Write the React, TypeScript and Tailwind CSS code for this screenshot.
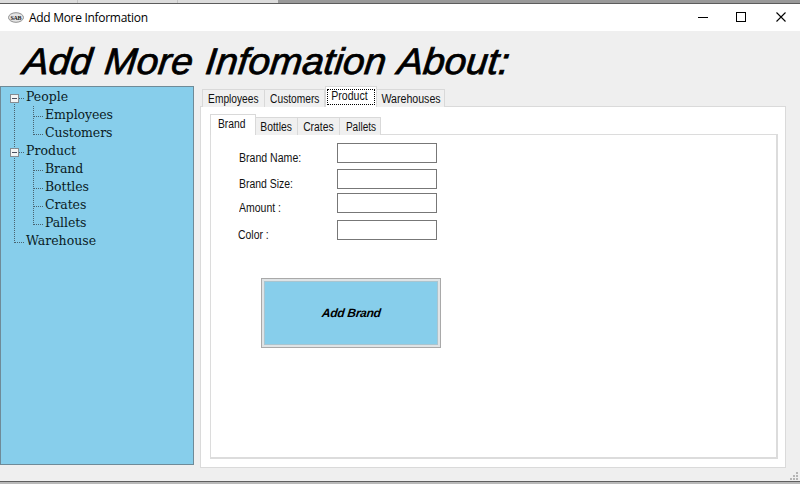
import React from "react";

const UI = "font-['Liberation_Sans',Arial,sans-serif]";

type TabSpec = { label: string; box: string; text: string };

function Tab({ label, box, text, selected, focused }: TabSpec & { selected?: boolean; focused?: boolean }) {
  return (
    <div
      className={`relative shrink-0 border border-b-0 border-[#d9d9d9] ${box} ${
        selected ? "z-10 h-[21px] bg-white" : "h-[18px] bg-[#f0f0f0]"
      }`}
    >
      {focused && <div className="absolute inset-x-[1px] top-[2px] bottom-[2px] border border-dotted border-black" />}
      <span className={`block origin-left whitespace-nowrap text-[12px] leading-[18px] text-[#111] ${text}`}>{label}</span>
    </div>
  );
}

const tree = [
  { label: "People", level: 0 },
  { label: "Employees", level: 1 },
  { label: "Customers", level: 1, last: true },
  { label: "Product", level: 0 },
  { label: "Brand", level: 1 },
  { label: "Bottles", level: 1 },
  { label: "Crates", level: 1 },
  { label: "Pallets", level: 1, last: true },
  { label: "Warehouse", level: 0, last: true },
];

function Branches({ index }: { index: number }) {
  const n = tree[index];
  return (
    <svg width="44" height="18" className="absolute left-0 top-0" shapeRendering="crispEdges">
      <g stroke="#49636f" strokeDasharray="1 1" fill="none">
        <path d={index === 0 ? "M13.5 10V18" : index === 8 ? "M13.5 0V11" : "M13.5 0V18"} />
        {n.level === 0 && <path d="M14 10.5H23" />}
        {n.level === 1 && <path d={n.last ? "M32.5 0V11" : "M32.5 0V18"} />}
        {n.level === 1 && <path d="M33 10.5H42" />}
      </g>
      {n.level === 0 && index !== 8 && (
        <g>
          <rect x="9.5" y="6.5" width="8" height="8" rx="1" fill="#f4f4f4" stroke="#858c92" />
          <path d="M11 10.5H16" stroke="#4b5162" />
        </g>
      )}
    </svg>
  );
}

const fields = [
  { label: "Brand Name:", gap: "mt-[8px]", pad: "pl-[28px] pt-[7px]", text: "scale-x-[0.88]" },
  { label: "Brand Size:", gap: "mt-[6px]", pad: "pl-[28px] pt-[7px]", text: "scale-x-[0.87]" },
  { label: "Amount :", gap: "mt-[4px]", pad: "pl-[28px] pt-[7px]", text: "scale-x-[0.875]" },
  { label: "Color :", gap: "mt-[7px]", pad: "pl-[27px] pt-[7px]", text: "scale-x-[0.87]" },
];

const outerTabs: TabSpec[] = [
  { label: "Employees", box: "w-[63px]", text: "pl-[6px] scale-x-[0.85]" },
  { label: "Customers", box: "w-[60px] border-l-0", text: "pl-[6px] scale-x-[0.85]" },
  { label: "Product", box: "w-[52px]", text: "pl-[6px] scale-x-[0.88]" },
  { label: "Warehouses", box: "w-[68px] border-l-0", text: "pl-[5px] scale-x-[0.885]" },
];

const innerTabs: TabSpec[] = [
  { label: "Brand", box: "w-[46px]", text: "pl-[8px] scale-x-[0.86]" },
  { label: "Bottles", box: "w-[42px] border-l-0", text: "pl-[5px] scale-x-[0.86]" },
  { label: "Crates", box: "w-[42px] border-l-0", text: "pl-[6px] scale-x-[0.86]" },
  { label: "Pallets", box: "w-[41px] border-l-0", text: "pl-[7px] scale-x-[0.84]" },
];

export default function App() {
  return (
    <div className={`flex h-[484px] w-[800px] flex-col overflow-hidden bg-[#efefef] ${UI}`}>
      <div className="flex h-[4px] shrink-0 border-b border-[#5c5c5c]">
        <div className="w-[78px] border-r border-[#c4c4c4] bg-[#dcdcdc]" />
        <div className="w-[100px] border-r border-[#c4c4c4] bg-[#dcdcdc]" />
        <div className="w-[100px] bg-[#dcdcdc]" />
        <div className="flex-1 bg-[#999]" />
      </div>

      <header className="flex h-[27px] shrink-0 items-center bg-white">
        <svg width="16" height="11" className="ml-[8px]">
          <ellipse cx="8" cy="5.5" rx="7.5" ry="4.8" fill="#e5e5e5" stroke="#858585" strokeWidth="0.9" />
          <text x="8" y="8" textAnchor="middle" textLength="11" fontSize="6" fontWeight="bold" fontFamily="Liberation Serif, serif" fill="#222">SAB</text>
        </svg>
        <span className="ml-[5px] whitespace-nowrap font-['Open_Sans','Noto_Sans',sans-serif] text-[12px] leading-[16px] tracking-[-0.3px] text-black">Add More Information</span>
        <svg width="110" height="26" className="ml-auto" shapeRendering="crispEdges" fill="none" stroke="#000">
          <path d="M8 12.5H18" />
          <rect x="46.5" y="7.5" width="9" height="9" />
          <path d="M86.5 7.5L95.5 16.5M95.5 7.5L86.5 16.5" shapeRendering="auto" strokeWidth="1.1" />
        </svg>
      </header>

      <h1 className="h-[55px] shrink-0 whitespace-nowrap pl-[21px] pt-[10px] text-[37px] leading-[42px] text-black">
        <span className="inline-block origin-bottom-left -skew-x-[6deg] scale-x-[1.045] italic [word-spacing:2px] [-webkit-text-stroke:0.8px_black]">
          Add More Infomation About:
        </span>
      </h1>

      <main className="flex h-[395px] shrink-0">
        <nav className="h-[379px] w-[194px] shrink-0 border border-[#6f8b98] bg-[#87ceeb] pt-[1px] font-['DejaVu_Serif',serif]">
          {tree.map((n, i) => (
            <div key={n.label} className="relative h-[18px]">
              <Branches index={i} />
              <span
                className={`block whitespace-nowrap text-[12.5px] leading-[18px] text-[#0b1c25] ${
                  n.level === 0 ? "pl-[25px]" : "pl-[44px] tracking-[-0.1px]"
                }`}
              >
                {n.label}
              </span>
            </div>
          ))}
        </nav>

        <section className="ml-[6px] w-[586px] pt-[2px]">
          <div className="flex h-[19px] items-end pl-[2px]">
            {outerTabs.map((t) => (
              <Tab key={t.label} {...t} selected={t.label === "Product"} focused={t.label === "Product"} />
            ))}
          </div>
          <div className="-mt-px h-[362px] border border-[#dadada] bg-white pl-[9px] pt-[8px]">
            <div className="flex h-[20px] items-end">
              {innerTabs.map((t) => (
                <Tab key={t.label} {...t} selected={t.label === "Brand"} />
              ))}
            </div>
            <div className="-mt-px h-[325px] w-[568px] border border-r-2 border-b-2 border-[#dcdcdc]">
              {fields.map((f) => (
                <label key={f.label} className={`flex h-[20px] ${f.gap}`}>
                  <span className={`w-[126px] shrink-0 text-[12px] leading-[16px] text-[#111] ${f.pad}`}>
                    <span className={`inline-block origin-left whitespace-nowrap ${f.text}`}>{f.label}</span>
                  </span>
                  <input className="h-[20px] w-[100px] border border-[#777] bg-white outline-none" />
                </label>
              ))}
              <button className="ml-[50px] mt-[38px] block h-[70px] w-[180px] border border-[#a9a9a9] bg-[#dfe3e5] p-[2px]">
                <span className="flex h-full items-center justify-center border border-[#a9c5d0] bg-[#87ceeb] text-[12px] text-black">
                  <span className="-skew-x-[6deg] whitespace-nowrap font-bold italic tracking-[-0.3px]">Add Brand</span>
                </span>
              </button>
            </div>
          </div>
        </section>
        <svg width="9" height="9" className="ml-auto mr-[1px] self-end" fill="#b5b5b5">
          <path d="M6 0h2v2h-2zM3 3h2v2h-2zM6 3h2v2h-2zM0 6h2v2h-2zM3 6h2v2h-2zM6 6h2v2h-2z" />
        </svg>
      </main>
      <footer className="h-[3px] shrink-0 border-t border-[#5f5f5f] bg-[#b9b9b9]" />
    </div>
  );
}
